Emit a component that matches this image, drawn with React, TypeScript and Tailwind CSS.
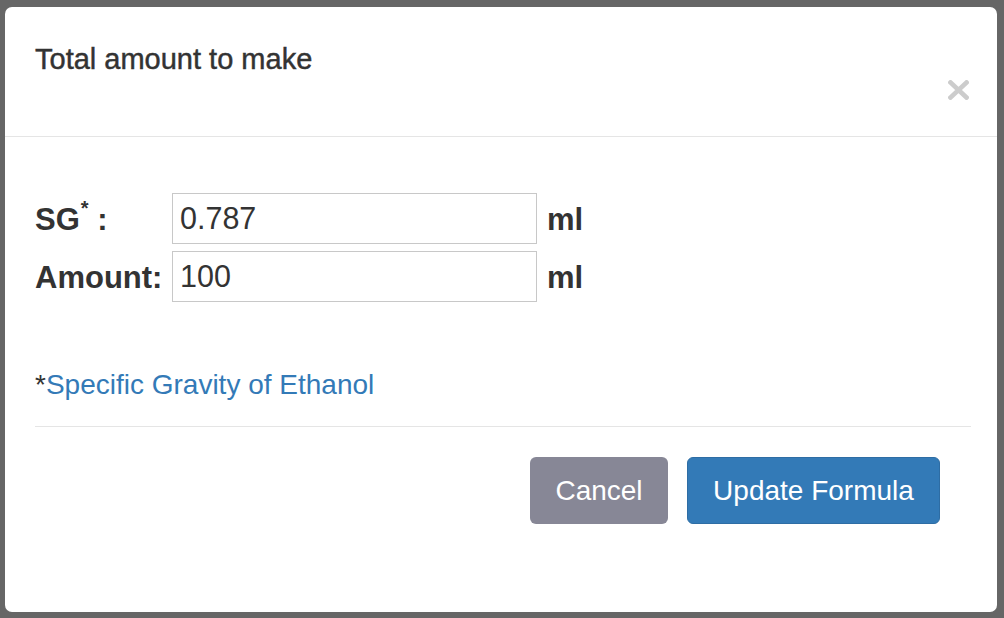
import React from "react";

const font = "font-['Liberation_Sans','Helvetica_Neue',Arial,sans-serif]";

function CloseIcon() {
  return (
    <svg width="21" height="20" viewBox="0 0 21 20" className="block">
      <path d="M2.5 2.5 L18.5 17.5 M18.5 2.5 L2.5 17.5" stroke="#cccccc" strokeWidth="4.6" strokeLinecap="square" fill="none" />
    </svg>
  );
}

function FieldRow({ label, value }: { label: React.ReactNode; value: string }) {
  return (
    <div className="flex items-center">
      <div className="w-[137px] shrink-0 text-[31px] font-bold text-[#333] leading-none pt-[2px]">{label}</div>
      <input
        readOnly
        value={value}
        className="w-[365px] h-[51px] border border-[#c8c8c8] px-[7px] text-[30.5px] text-[#333] outline-none bg-white"
      />
      <span className="ml-[10px] text-[31px] font-bold text-[#333] leading-none pt-[2px]">ml</span>
    </div>
  );
}

export default function App() {
  return (
    <div className={`w-[1004px] h-[618px] overflow-hidden bg-[#666666] pt-[7px] pl-[5px] ${font}`}>
      <div className="w-[992px] h-[605px] bg-white rounded-[7px] flex flex-col">
        {/* header */}
        <div className="h-[130px] shrink-0 border-b border-[#e5e5e5] flex justify-between items-start pl-[30px] pr-[28px]">
          <h4 className="pt-[36px] text-[29px] leading-[32px] text-[#333] [-webkit-text-stroke:0.45px_#333]">
            Total amount to make
          </h4>
          <button className="mt-[73px]">
            <CloseIcon />
          </button>
        </div>

        {/* body */}
        <div className="pl-[30px] pr-[26px] pt-[56px]">
          <div className="flex flex-col gap-[7px]">
            <FieldRow
              label={
                <span>
                  SG<span className="inline-block align-top text-[20px] leading-none -mt-[6px] ml-[1px]">*</span> :
                </span>
              }
              value="0.787"
            />
            <FieldRow label="Amount:" value="100" />
          </div>

          <p className="mt-[67px] text-[28px] leading-[32px] text-[#333]">
            *<a className="text-[#337ab7]">Specific Gravity of Ethanol</a>
          </p>

          <div className="mt-[25px] border-t border-[#e5e5e5]" />
        </div>

        {/* footer */}
        <div className="flex justify-end gap-[19px] pt-[30px] pr-[57px]">
          <button className="w-[138px] h-[67px] rounded-[6px] bg-[#878796] text-white text-[28px]">Cancel</button>
          <button className="w-[253px] h-[67px] rounded-[6px] bg-[#337ab7] border border-[#2e6da4] text-white text-[28px]">
            Update Formula
          </button>
        </div>
      </div>
    </div>
  );
}
